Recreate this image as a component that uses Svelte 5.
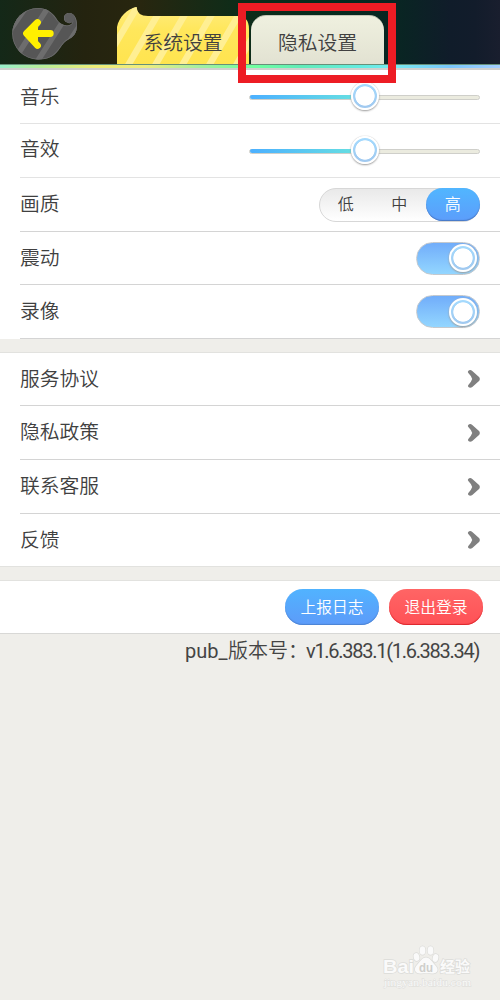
<script>
  const sliders = [
    { label: '音乐', lift: -2 },
    { label: '音效', lift: -5 }
  ];
  const levels = ['低', '中', '高'];
  let level = $state('高');
  let toggles = $state([
    { label: '震动', on: true },
    { label: '录像', on: true }
  ]);
  const links = ['服务协议', '隐私政策', '联系客服', '反馈'];
</script>

<div class="page">
  <header>
    <button class="back" aria-label="返回">
      <svg width="80" height="64" viewBox="0 0 80 64">
        <defs>
          <clipPath id="blob">
            <path d="M38 8C46 8 52 12 56 18C58.500 22 60.500 24 64 25C68 26 72 25 72.500 22C71 23 69.500 23.500 68.500 23C65.500 22.500 64 20.500 64 18C64 15 66.500 13 69.500 13C74 13 77 18.500 77 24.500C77 34 73 37 67.500 40C58 46 59 59.500 38 59.500A25.700 25.700 0 0 1 38 8Z" />
          </clipPath>
        </defs>
        <g clip-path="url(#blob)">
          <rect width="80" height="64" fill="#565656" />
          <path d="M-5 52 31 0M13 62 49 6M37 62 69 12M56 62 86 16" stroke="#6d6d6d" stroke-width="5.500" />
          <path d="M38 8C46 8 52 12 56 18C58.500 22 60.500 24 64 25C68 26 72 25 72.500 22C71 23 69.500 23.500 68.500 23C65.500 22.500 64 20.500 64 18C64 15 66.500 13 69.500 13C74 13 77 18.500 77 24.500C77 34 73 37 67.500 40C58 46 59 59.500 38 59.500A25.700 25.700 0 0 1 38 8Z" fill="none" stroke="#6c6c6c" stroke-width="1.500" />
          <circle cx="69.500" cy="18" r="5" fill="#5c5c5c" />
        </g>
        <path d="M37.500 22.500 26.500 33.500 37.500 45.500M28 33.500H50.300" fill="none" stroke="#fff000" stroke-width="6.800" stroke-linecap="round" stroke-linejoin="round" />
        <path d="M28 33.500 38 24V43Z" fill="#fff000" />
      </svg>
    </button>
    <nav>
      <button class="tab system">
        <svg width="132" height="58" viewBox="0 0 132 58">
          <defs>
            <linearGradient id="gold" x1="0" y1="0" x2="0" y2="1">
              <stop offset="0" stop-color="#ffec80" />
              <stop offset=".4" stop-color="#ffe75c" />
              <stop offset="1" stop-color="#ffe44f" />
            </linearGradient>
            <clipPath id="tabshape">
              <path d="M0 58V21C2 11 10 3 19.500 1Q20 10 31 10H120Q132 10 132 23V58Z" />
            </clipPath>
          </defs>
          <g clip-path="url(#tabshape)">
            <rect width="132" height="58" fill="url(#gold)" />
            <path d="M-7 47 23 -4M9 63 44 3M36 63 71 3M63 63 98 3M90 63 125 3M117 63 152 3" stroke="#ffef93" stroke-width="6.500" />
          </g>
        </svg>
        <span>系统设置</span>
      </button>
      <button class="tab privacy"><span>隐私设置</span></button>
    </nav>
    <div class="highlight"></div>
  </header>
  <div class="rainbow"></div>

  <section class="settings">
    {#each sliders as s}
      <div class="row">
        <span class="label" style:margin-top="{s.lift}px">{s.label}</span>
        <div class="slider"><div class="fill"></div><i class="knob"></i></div>
      </div>
    {/each}
    <div class="row">
      <span class="label raised">画质</span>
      <div class="segments">
        {#each levels as l}
          <button class:active={level === l} onclick={() => (level = l)}>{l}</button>
        {/each}
      </div>
    </div>
    {#each toggles as t}
      <div class="row dark">
        <span class="label raised">{t.label}</span>
        <button class="toggle" class:off={!t.on} aria-label={t.label} onclick={() => (t.on = !t.on)}><i class="knob"></i></button>
      </div>
    {/each}
  </section>

  <section class="links">
    {#each links as link}
      <div class="row dark">
        <span class="label raised">{link}</span>
        <svg class="chevron" width="14" height="20" viewBox="0 0 14 20">
          <path d="M1.200 1.900Q3.200.2 5.300 2L12.300 8.300Q13.500 10 12.300 11.700L5.300 18Q3.200 19.600 1.400 18Q.6 17 1.300 15.900Q4.300 13 5.200 10Q4.300 7 1.300 4.100Q.4 3 1.200 1.900Z" fill="#808080" />
        </svg>
      </div>
    {/each}
  </section>

  <section class="actions">
    <button class="pill blue">上报日志</button>
    <button class="pill red">退出登录</button>
  </section>

  <div class="version">
    <span class="latin pub">pub_</span><span>版本号：</span><span class="latin number">v1.6.383.1(1.6.383.34)</span>
  </div>

  <footer>
    <svg width="100" height="50" viewBox="0 0 100 50">
      <g fill="#fafafa" stroke="#dcdcd9" stroke-width="1.400" paint-order="stroke">
        <text x="2" y="31" class="logo" font-size="19" textLength="31" lengthAdjust="spacingAndGlyphs">Bai</text>
        <ellipse cx="35.500" cy="15" rx="2.800" ry="4" transform="rotate(-15 35.500 15)" />
        <ellipse cx="41.500" cy="8.500" rx="2.900" ry="4.300" />
        <ellipse cx="49.500" cy="8.500" rx="2.900" ry="4.300" />
        <ellipse cx="54.500" cy="16" rx="2.800" ry="4" transform="rotate(15 54.500 16)" />
        <path d="M45 15.500C49 15.500 51 20 54 23C59 28 56 32 51 31.500C47 31 44 31 40 31.500C34 32 32 27 36 23C39 20 41 15.500 45 15.500Z" />
        <text x="59" y="30" class="cn" font-size="15" textLength="30" lengthAdjust="spacingAndGlyphs">经验</text>
        <text x="3" y="43.500" class="url" font-size="11" textLength="87" lengthAdjust="spacingAndGlyphs" stroke-width=".8">jingyan.baidu.com</text>
      </g>
      <text x="38" y="29.500" class="logo" font-size="12.500" fill="#cfcfcc" textLength="14" lengthAdjust="spacingAndGlyphs">du</text>
    </svg>
  </footer>
</div>

<style>
  :global(body) { background: #efeeea; }
  .page {
    width: 500px; height: 1000px; overflow: hidden;
    display: flex; flex-direction: column;
    background: #efeeea; color: #404040;
    font-family: "Noto Sans CJK SC", sans-serif; font-size: 19.8px; font-weight: 350;
  }
  button { border: 0; padding: 0; margin: 0; background: none; font: inherit; color: inherit; }
  svg { display: block; }
  header {
    position: relative; height: 64px; flex: none; display: flex;
    background: linear-gradient(90deg, #142818 0, #24230f 17%, #28260f 28%, #102c18 46%, #062c1e 65%, #092523 80%, #101c2a 90%, #121c2b 95%, #191e2e 100%);
  }
  .back { width: 117px; }
  nav { display: flex; align-items: flex-end; gap: 2px; }
  .tab { height: 58px; }
  .tab span { display: block; line-height: 30px; }
  .system { width: 132px; display: grid; }
  .system svg, .system span { grid-area: 1 / 1; }
  .system span { align-self: center; margin-top: 13px; }
  .privacy {
    width: 133px; height: 49px; border-radius: 15px 15px 0 0;
    border-top: 1px solid #c6c7b7; box-sizing: border-box;
    background: linear-gradient(#eff0df, #e2e2d2);
  }
  .privacy span { padding-top: 3px; }
  .highlight {
    position: absolute; z-index: 2; left: 238px; top: 3px; width: 158px; height: 80px;
    border: 8px solid #ed1c24; box-sizing: border-box; pointer-events: none;
  }
  .rainbow {
    height: 6px; flex: none; border-top: 1px solid #669079; border-bottom: 2px solid #d0d0ce; box-sizing: border-box;
    background: linear-gradient(90deg, #99efcd 0, #b7ee9a 8%, #eeec78 19%, #efed80 29%, #a4efa0 40%, #6fffa0 51%, #62ecb8 60%, #63ece0 72%, #78eaf0 79%, #79c6fb 90%, #a6ceff 100%);
  }
  section { flex: none; background: #fff; }
  .row {
    box-sizing: border-box; margin-left: 20px; padding-right: 20px;
    display: flex; align-items: center; justify-content: space-between;
    border-bottom: 1px solid #e3e3e3;
  }
  .row.dark, .row:has(.segments) { border-color: #d4d4d4; }
  .label { line-height: 30px; }
  .raised { margin-top: -3px; }
  .settings { height: 269px; display: grid; grid-template-rows: 54px 54px 54px 53px 54px; }
  .slider {
    width: 231px; height: 5px; border-radius: 3px; box-sizing: border-box;
    border: 1px solid #cfcfca; background: #ebebdf; display: flex; align-items: center;
    margin-top: 1px;
  }
  .fill { width: 101px; height: 4px; border-radius: 2px 0 0 2px; background: linear-gradient(90deg, #4cb0ff, #65dde3); flex: none; }
  .knob {
    width: 28px; height: 28px; box-sizing: border-box; border-radius: 50%; flex: none;
    border: 2px solid #fff; box-shadow: 0 0 1px 0 #bbb, 0 1px 2px 0 #999;
    background: radial-gradient(circle, #fff 9.300px, transparent 10px), linear-gradient(#a5dcff, #a0c7ee);
    background-origin: border-box;
  }
  .slider .knob { margin-top: -2px; }
  .segments {
    width: 161px; height: 34px; box-sizing: border-box; margin: 1px 0 0;
    border: 1px solid #d7d7d7; border-radius: 17px; display: flex;
    background: linear-gradient(#e9e9e9, #fff);
  }
  .segments button { width: 53.500px; height: 33px; margin-top: -1px; border-radius: 16.500px; font-size: 16px; line-height: 31px; flex: none; padding-bottom: 2px; }
  .segments button:first-child { margin-left: -1px; }
  .segments .active { color: #fff; background: linear-gradient(#51b6ff, #5c9dfb); box-shadow: inset 0 -1px 1px #4878c4; }
  .toggle {
    width: 64px; height: 33px; border: 1px solid #c4c9ce; border-radius: 17px;
    display: flex; justify-content: flex-end; align-items: center; box-sizing: border-box; padding-right: 2px;
    background: linear-gradient(#71adfa, #93d6ff);
  }
  .toggle.off { justify-content: flex-start; padding-left: 2px; background: #e5e5e5; }
  .links { margin-top: 13px; border-top: 1px solid #e2e2df; display: grid; grid-template-rows: 53px 54px 54px 53px; }
  .links .row:last-child { margin-left: 0; padding-left: 20px; border-color: #e2e2df; }
  .chevron { margin-right: -1px; }
  .actions {
    margin-top: 13px; height: 54px; box-sizing: border-box; border-top: 1px solid #e2e2df; border-bottom: 1px solid #d8d8d6;
    display: flex; justify-content: flex-end; align-items: center; gap: 10px; padding-right: 17px;
  }
  .pill { width: 94px; height: 36px; border-radius: 18px; color: #fff; font-size: 15.800px; line-height: 34px; padding-bottom: 1px; }
  .blue { background: linear-gradient(#51b3ff, #5d9bf9); box-shadow: inset 0 -1px 1px #4c83d2; }
  .red { background: linear-gradient(#ff6565, #ff5156); box-shadow: inset 0 -1px 1px #dc252b; }
  .version {
    flex: none; display: flex; align-items: baseline; margin-left: 185px; height: 34px; line-height: 32px;
    color: #444; font-size: 20px; white-space: nowrap;
  }
  .latin { font-family: Roboto, sans-serif; font-weight: 400; }
  .pub { width: 43px; }
  .number { margin-left: -2px; letter-spacing: -1.280px; }
  footer { margin-top: auto; margin-left: 381px; height: 58px; }
  .logo { font-family: "Liberation Sans", sans-serif; font-weight: bold; }
  .cn { font-weight: bold; }
  .url { font-family: "Liberation Serif", serif; }
</style>
